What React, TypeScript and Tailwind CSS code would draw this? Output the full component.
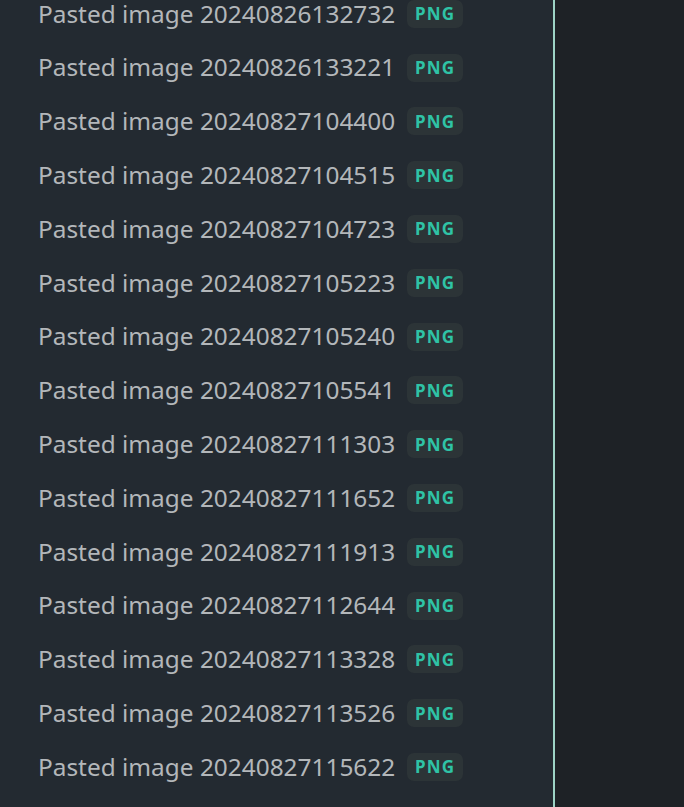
import React from "react";

const items = [
  "20240826132732",
  "20240826133221",
  "20240827104400",
  "20240827104515",
  "20240827104723",
  "20240827105223",
  "20240827105240",
  "20240827105541",
  "20240827111303",
  "20240827111652",
  "20240827111913",
  "20240827112644",
  "20240827113328",
  "20240827113526",
  "20240827115622",
];

export default function App() {
  return (
    <div className="flex h-[807px] w-[684px] overflow-hidden bg-[#1e2226]">
      <div className="w-[553px] shrink-0 bg-[#232a31] overflow-hidden">
        <div className="-mt-[13px] flex flex-col pl-[38px]">
          {items.map((d) => (
            <div key={d} className="flex h-[53.8px] items-center gap-[12px]">
              <span
                className="text-[24.4px] text-[#b3b7ba] whitespace-nowrap"
                style={{ fontFamily: '"Noto Sans", "Open Sans", sans-serif' }}
              >
                Pasted image {d}
              </span>
              <span
                className="flex h-[28px] w-[56px] items-center justify-center rounded-[7px] bg-[#2c3437] text-[17px] font-bold tracking-[1.2px] text-[#2fc3a6]"
                style={{ fontFamily: '"Noto Sans", "Open Sans", sans-serif' }}
              >
                PNG
              </span>
            </div>
          ))}
        </div>
      </div>
      <div className="w-[2px] shrink-0 bg-[#9dd3c5]" />
      <div className="flex-1 bg-[#1e2226]" />
    </div>
  );
}
